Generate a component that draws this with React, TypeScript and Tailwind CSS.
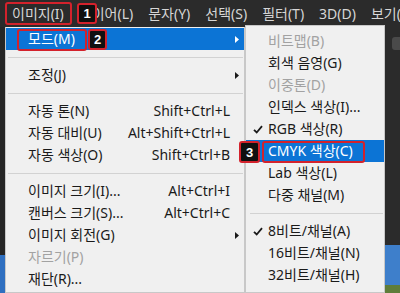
import React from 'react';

type Item =
    | { kind: 'sep' }
    | {
          kind?: 'item';
          label: string;
          shortcut?: string;
          arrow?: boolean;
          disabled?: boolean;
          active?: boolean;
          checked?: boolean;
      };

const mainMenu: Item[] = [
    { label: '모드(M)', arrow: true, active: true },
    { kind: 'sep' },
    { label: '조정(J)', arrow: true },
    { kind: 'sep' },
    { label: '자동 톤(N)', shortcut: 'Shift+Ctrl+L' },
    { label: '자동 대비(U)', shortcut: 'Alt+Shift+Ctrl+L' },
    { label: '자동 색상(O)', shortcut: 'Shift+Ctrl+B' },
    { kind: 'sep' },
    { label: '이미지 크기(I)...', shortcut: 'Alt+Ctrl+I' },
    { label: '캔버스 크기(S)...', shortcut: 'Alt+Ctrl+C' },
    { label: '이미지 회전(G)', arrow: true },
    { label: '자르기(P)', disabled: true },
    { label: '재단(R)...' },
];

const modeMenu: Item[] = [
    { label: '비트맵(B)', disabled: true },
    { label: '회색 음영(G)' },
    { label: '이중톤(D)', disabled: true },
    { label: '인덱스 색상(I)...' },
    { label: 'RGB 색상(R)', checked: true },
    { label: 'CMYK 색상(C)', active: true },
    { label: 'Lab 색상(L)' },
    { label: '다중 채널(M)' },
    { kind: 'sep' },
    { label: '8비트/채널(A)', checked: true },
    { label: '16비트/채널(N)' },
    { label: '32비트/채널(H)' },
];

const menuBar = ['이미지(I)', '레이어(L)', '문자(Y)', '선택(S)', '필터(T)', '3D(D)', '보기(V)'];

const Arrow = ({ white }: { white?: boolean }) => (
    <svg width="4" height="7" viewBox="0 0 4 7">
        <path d="M0 0 L4 3.5 L0 7 Z" fill={white ? '#ffffff' : '#1a1a1a'} />
    </svg>
);

const Check = () => (
    <svg width="10" height="9" viewBox="0 0 10 9">
        <path d="M1 4.8 L3.7 7.5 L9 1.2" fill="none" stroke="#1a1a1a" strokeWidth="1.8" />
    </svg>
);

// numbered callout
const Badge = ({ n, className }: { n: string; className: string }) => (
    <div
        className={`absolute flex items-center justify-center bg-[#101010] border-2 border-[#d3222c] rounded-[3px] text-white text-[13px] font-bold font-['Liberation_Sans',sans-serif] ${className}`}
    >
        {n}
    </div>
);

export default function App() {
    return (
        <div className="relative w-[400px] h-[293px] overflow-hidden bg-[#2b2b2b] font-['Noto_Sans','Noto_Sans_CJK_KR',sans-serif] text-[14px] leading-none">
            {/* Menu bar */}
            <div className="h-[27px] flex items-center gap-[15px] pl-[12px] text-[#d6d6d6] whitespace-nowrap">
                {menuBar.map((m) => (
                    <span key={m}>{m}</span>
                ))}
            </div>

            <div className="flex h-[266px]">
                {/* left edge of canvas */}
                <div className="w-[5px] flex flex-col">
                    <div className="flex-1 bg-[#262626]" />
                    <div className="h-[38px] bg-[#2f6fc0]" />
                </div>

                {/* Image menu */}
                <div className="w-[240px] bg-[#f0f0f0] border border-[#c8c8c8] border-t-0 pt-[1px]">
                    {mainMenu.map((it, i) =>
                        it.kind === 'sep' ? (
                            <div key={i} className="h-[14px] flex items-center pl-[2px] pr-[1px]">
                                <div className="h-px w-full bg-[#d2d2d2]" />
                            </div>
                        ) : (
                            <div
                                key={i}
                                className={`h-[22px] flex items-center pl-[22px] whitespace-nowrap ${
                                    it.active ? 'bg-[#0c74d5] text-white' : it.disabled ? 'text-[#a2a2a2]' : 'text-[#1a1a1a]'
                                }`}
                            >
                                <span className="flex-1">{it.label}</span>
                                {it.shortcut && <span>{it.shortcut}</span>}
                                <div className="w-[14px] flex items-center pl-[5px]">
                                    {it.arrow && <Arrow white={it.active} />}
                                </div>
                            </div>
                        )
                    )}
                </div>

                {/* Mode submenu */}
                <div className="w-[140px] -mt-[2px] bg-[#f0f0f0] border border-[#c8c8c8] pt-[4px]">
                    {modeMenu.map((it, i) =>
                        it.kind === 'sep' ? (
                            <div key={i} className="h-[14px] flex items-center pl-[4px] pr-[1px]">
                                <div className="h-px w-full bg-[#d2d2d2]" />
                            </div>
                        ) : (
                            <div
                                key={i}
                                className={`h-[22px] flex items-center whitespace-nowrap ${
                                    it.active ? 'bg-[#0c74d5] text-white' : it.disabled ? 'text-[#a2a2a2]' : 'text-[#1a1a1a]'
                                }`}
                            >
                                <div className="w-[22px] pl-[7px] flex items-center">{it.checked && <Check />}</div>
                                <span>{it.label}</span>
                            </div>
                        )
                    )}
                </div>

                {/* right edge of canvas */}
                <div className="flex-1 flex flex-col">
                    <div className="h-[10px]" />
                    <div className="h-[13px] ml-[7px] rounded-l-[3px] bg-[#4a4a4a]" />
                    <div className="flex-1" />
                    <div className="h-[40px] bg-[#3e7fcb]" />
                    <div className="h-[8px] bg-[#5f7d3a]" />
                </div>
            </div>

            {/* annotations */}
            <div className="absolute left-[5px] top-[2px] w-[67px] h-[23px] border-2 border-[#d3222c] rounded-[3px]" />
            <Badge n="1" className="left-[77px] top-[3px] w-[20px] h-[21px]" />
            <div className="absolute left-[17px] top-[29px] w-[70px] h-[22px] border-2 border-[#d3222c] rounded-[3px]" />
            <Badge n="2" className="left-[88px] top-[29px] w-[19px] h-[21px]" />
            <div className="absolute left-[262px] top-[141px] w-[103px] h-[22px] border-2 border-[#d3222c] rounded-[3px]" />
            <Badge n="3" className="left-[239px] top-[141px] w-[21px] h-[22px]" />
        </div>
    );
}
